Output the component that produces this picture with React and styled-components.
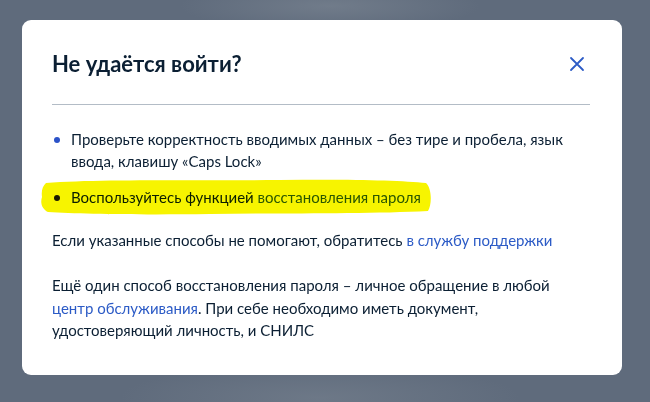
import React from 'react'
import styled, { createGlobalStyle } from 'styled-components'

const GlobalStyle = createGlobalStyle`
  html, body { margin: 0; padding: 0; }
  body {
    width: 650px;
    height: 402px;
    overflow: hidden;
    font-family: Lato, "Noto Sans", sans-serif;
  }
`;

const Backdrop = styled.div`
  width: 650px;
  height: 402px;
  box-sizing: border-box;
  padding: 20px 28px 0 22px;
  background:
    radial-gradient(ellipse 150px 25px at 330px 6px, rgba(130,140,152,0.5), transparent),
    radial-gradient(ellipse 200px 35px at 320px 398px, rgba(130,140,152,0.4), transparent),
    #5f6b7c;
`;

const Modal = styled.div`
  width: 600px;
  height: 355px;
  box-sizing: border-box;
  background: #fff;
  border-radius: 9px;
  padding: 30px 32px 0 30px;
  color: #0b1f33;
`;

const Header = styled.div`
  display: flex;
  align-items: center;
  justify-content: space-between;
  padding-bottom: 26px;
  border-bottom: 1px solid #b3bcc6;
`;

const Title = styled.h2`
  margin: 0;
  font-size: 22px;
  line-height: 28px;
  font-weight: 700;
`;

const Close = styled.button`
  border: none;
  background: none;
  padding: 0;
  margin-right: 5px;
  width: 16px;
  height: 16px;
  display: flex;
  cursor: pointer;
`;

const List = styled.ul`
  list-style: none;
  margin: 24px 0 0;
  padding: 0;
  display: flex;
  flex-direction: column;
  gap: 15px;
`;

const Item = styled.li`
  position: relative;
  padding-left: 19px;
  font-size: 15px;
  line-height: 21.5px;
  &::before {
    content: '';
    position: absolute;
    left: 2px;
    top: 8px;
    width: 6px;
    height: 6px;
    border-radius: 50%;
    background: ${({ $dot }) => $dot || '#2b52c8'};
  }
`;

const Marker = styled.svg`
  position: absolute;
  left: -12px;
  top: -9px;
  width: 393px;
  height: 38px;
  mix-blend-mode: multiply;
  pointer-events: none;
`;

const Paragraph = styled.p`
  margin: ${({ $top }) => $top} 0 0;
  font-size: 15px;
  line-height: 22.5px;
`;

const Link = styled.a`
  color: #2c5bc6;
  text-decoration: none;
`;

export default function App() {
  return (
    <>
      <GlobalStyle />
      <Backdrop>
        <Modal>
          <Header>
            <Title>Не удаётся войти?</Title>
            <Close aria-label="Закрыть">
              <svg width="16" height="16" viewBox="0 0 16 16">
                <path d="M2 2L14 14M14 2L2 14" stroke="#2c5bc6" strokeWidth="1.8" strokeLinecap="round" />
              </svg>
            </Close>
          </Header>
          <List>
            <Item>
              Проверьте корректность вводимых данных – без тире и пробела, язык ввода, клавишу «Caps Lock»
            </Item>
            <Item $dot="#1a1a1a">
              Воспользуйтесь функцией <Link>восстановления пароля</Link>
              <Marker viewBox="0 0 393 38" preserveAspectRatio="none">
                <path
                  d="M6 5 C60 1 150 3 240 2 C300 1 360 2 386 5 C392 10 392 27 388 33 C330 36 250 35 170 36 C100 37 40 36 8 34 C2 31 0 25 2 19 C1 12 3 8 6 5 Z"
                  fill="#f7f400"
                />
              </Marker>
            </Item>
          </List>
          <Paragraph $top="20px">
            Если указанные способы не помогают, обратитесь <Link>в службу поддержки</Link>
          </Paragraph>
          <Paragraph $top="23px">
            Ещё один способ восстановления пароля – личное обращение в любой{' '}
            <Link>центр обслуживания</Link>. При себе необходимо иметь документ, удостоверяющий личность, и СНИЛС
          </Paragraph>
        </Modal>
      </Backdrop>
    </>
  )
}
